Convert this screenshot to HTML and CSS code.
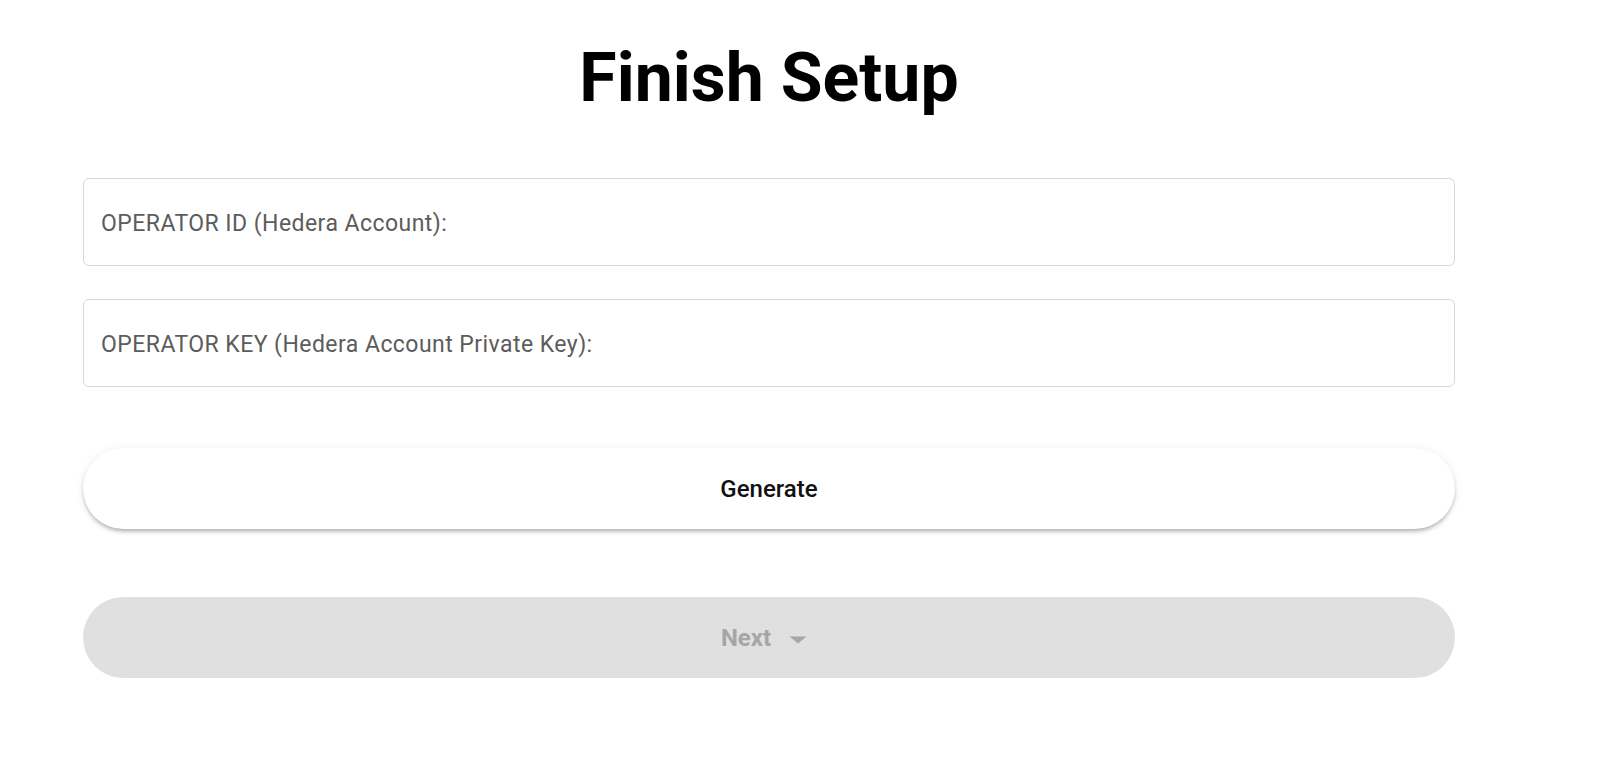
FILE: index.html
```html
<!DOCTYPE html>
<html>
<head>
<meta charset="utf-8">
<link rel="stylesheet" href="styles.css">
</head>
<body>
<div class="page">
  <h1 class="title">Finish Setup</h1>
  <div class="field"><span class="label">OPERATOR ID (Hedera Account):</span></div>
  <div class="field field-second"><span class="label">OPERATOR KEY (Hedera Account Private Key):</span></div>
  <button class="btn btn-generate">Generate</button>
  <button class="btn btn-next" disabled>
    <span>Next</span>
    <svg class="caret" width="18" height="8" viewBox="0 0 18 8"><path d="M0.5 0.5 L17.5 0.5 L9 7.5 Z" fill="#a6a6a6"/></svg>
  </button>
</div>
</body>
</html>
```
FILE: styles.css
```css
html, body {
  margin: 0;
  padding: 0;
  background: #ffffff;
}
body {
  font-family: Roboto, "Noto Sans", sans-serif;
}
.page {
  width: 1372px;
  margin-left: 83px;
  padding-top: 37px;
  display: flex;
  flex-direction: column;
}
.title {
  margin: 0;
  font-size: 68px;
  line-height: 82px;
  font-weight: 700;
  color: #000;
  text-align: center;
}
.field {
  margin-top: 59px;
  height: 84px;
  border: 1px solid #d8d8d8;
  border-radius: 6px;
  display: flex;
  align-items: center;
  padding-left: 17px;
  padding-top: 2px;
  box-sizing: content-box;
}
.field-second {
  margin-top: 33px;
}
.label {
  font-size: 23px;
  letter-spacing: 0.45px;
  color: #5c5c5c;
}
.btn {
  border: none;
  height: 81px;
  border-radius: 41px;
  font-family: Roboto, "Noto Sans", sans-serif;
  font-size: 24px;
  font-weight: 500;
  display: flex;
  align-items: center;
  justify-content: center;
  padding: 0;
  width: 100%;
}
.btn-generate {
  margin-top: 61px;
  background: #fff;
  color: #111;
  box-shadow: 0 3px 4px -1px rgba(0,0,0,0.3), 0 1px 10px rgba(0,0,0,0.07);
}
.btn-next {
  margin-top: 68px;
  background: #e0e0e0;
  color: #a6a6a6;
  font-weight: 700;
  gap: 18px;
  padding-right: 10px;
}
.caret {
  display: block;
  margin-top: 4px;
}
```
